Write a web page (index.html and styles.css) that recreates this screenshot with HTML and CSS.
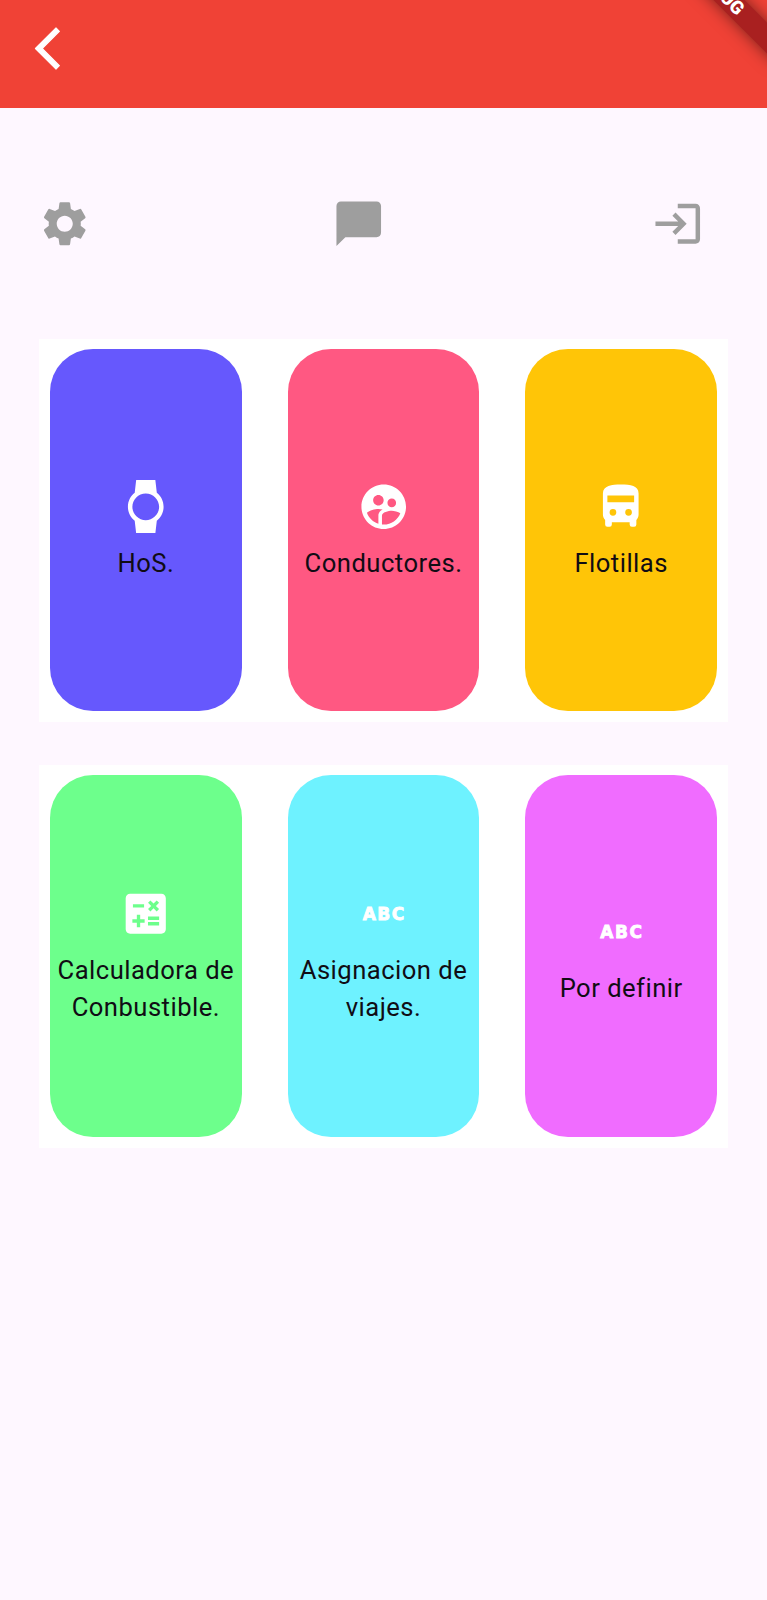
FILE: index.html
```html
<!DOCTYPE html>
<html lang="es">
<head>
<meta charset="utf-8">
<title>Menu</title>
<link rel="stylesheet" href="styles.css">
</head>
<body>
<header class="appbar">
  <svg class="back" viewBox="0 0 24 24"><path d="M17.600 3.900 16 2.300 6.300 12l9.700 9.700 1.600-1.600L9.500 12z"/></svg>
  <div class="ribbon">DEBUG</div>
</header>
<nav class="tools">
  <svg class="icon" viewBox="0 0 24 24"><path d="M19.14 12.94c.04-.3.06-.61.06-.94 0-.32-.02-.64-.07-.94l2.03-1.58c.18-.14.23-.41.12-.61l-1.92-3.32c-.12-.22-.37-.29-.59-.22l-2.39.96c-.5-.38-1.03-.7-1.62-.94l-.36-2.54c-.04-.24-.24-.41-.48-.41h-3.84c-.24 0-.43.17-.47.41l-.36 2.54c-.59.24-1.13.57-1.62.94l-2.39-.96c-.22-.08-.47 0-.59.22L2.740 8.870c-.12.21-.08.47.12.61l2.030 1.580c-.05.3-.09.63-.09.94s.02.64.07.94l-2.030 1.580c-.18.14-.23.41-.12.61l1.920 3.320c.12.22.37.29.59.22l2.390-.96c.5.38 1.030.7 1.620.94l.36 2.540c.05.24.24.41.48.41h3.840c.24 0 .44-.17.47-.41l.36-2.540c.59-.24 1.130-.56 1.620-.94l2.390.96c.22.08.47 0 .59-.22l1.920-3.320c.12-.22.07-.47-.12-.61l-2.010-1.580zM12 15.600c-1.980 0-3.600-1.620-3.600-3.600s1.620-3.600 3.600-3.600 3.600 1.620 3.600 3.600-1.620 3.600-3.600 3.600z"/></svg>
  <svg class="icon chat" viewBox="0 0 24 24"><path d="M20 2H4c-1.100 0-2 .9-2 2v18l4-4h14c1.100 0 2-.9 2-2V4c0-1.100-.9-2-2-2z"/></svg>
  <svg class="icon exit" viewBox="0 0 24 24"><path d="M11 7 9.600 8.400l2.600 2.600H2v2h10.200l-2.600 2.600L11 17l5-5zM20 19h-8v2h8c1.100 0 2-.9 2-2V5c0-1.100-.9-2-2-2h-8v2h8z"/></svg>
</nav>
<main class="panels">
  <section class="panel">
    <div class="card blue">
      <svg class="icon" viewBox="0 0 24 24"><path d="M20 12c0-2.540-1.190-4.810-3.040-6.270L16.300 0H7.700l-.65 5.730C5.190 7.190 4 9.450 4 12s1.190 4.810 3.050 6.270L7.700 24h8.600l.66-5.730C18.810 16.810 20 14.540 20 12zM6 12c0-3.310 2.690-6 6-6s6 2.690 6 6-2.690 6-6 6-6-2.690-6-6z"/></svg>
      <span>HoS.</span>
    </div>
    <div class="card pink">
      <svg class="icon" viewBox="0 0 24 24"><path d="M11.990 2c-5.520 0-10 4.480-10 10s4.480 10 10 10 10-4.480 10-10-4.480-10-10-10zm3.610 6.340c1.070 0 1.930.86 1.930 1.930 0 1.070-.86 1.930-1.930 1.930-1.070 0-1.930-.86-1.930-1.930-.01-1.070.86-1.930 1.930-1.930zm-6-1.580c1.300 0 2.360 1.060 2.360 2.360 0 1.300-1.060 2.360-2.360 2.360s-2.360-1.060-2.360-2.360c0-1.310 1.050-2.360 2.360-2.360zm0 9.130v3.750c-2.400-.75-4.300-2.600-5.140-4.960 1.050-1.120 3.670-1.690 5.140-1.690.53 0 1.200.08 1.900.22-1.640.87-1.900 2.020-1.900 2.680zM11.990 20c-.27 0-.53-.01-.79-.04v-4.070c0-1.420 2.940-2.130 4.400-2.130 1.070 0 2.920.39 3.840 1.150-1.170 2.970-4.060 5.090-7.450 5.090z"/></svg>
      <span>Conductores.</span>
    </div>
    <div class="card amber">
      <svg class="icon" viewBox="0 0 24 24"><path fill-rule="evenodd" d="M12 2C8 2 4 2.500 4 6v9.500c0 .95.38 1.810 1 2.440V20a1 1 0 0 0 1 1h1a1 1 0 0 0 1-1v-1h8v1a1 1 0 0 0 1 1h1a1 1 0 0 0 1-1v-2.060c.62-.63 1-1.490 1-2.440V6c0-3.500-3.580-4-8-4zM8.500 16a1.500 1.500 0 1 1 0-3 1.500 1.500 0 0 1 0 3zM15.500 16a1.500 1.500 0 1 1 0-3 1.500 1.500 0 0 1 0 3zM18 10H6V7h12z"/></svg>
      <span>Flotillas</span>
    </div>
  </section>
  <section class="panel">
    <div class="card green">
      <svg class="icon" viewBox="0 0 24 24"><path d="M19 3H5c-1.100 0-2 .9-2 2v14c0 1.100.9 2 2 2h14c1.100 0 2-.9 2-2V5c0-1.100-.9-2-2-2zm-5.970 4.060L14.090 6l1.410 1.410L16.910 6l1.060 1.060-1.410 1.410 1.410 1.410-1.060 1.060-1.410-1.400-1.410 1.410-1.060-1.060 1.410-1.410-1.410-1.420zm-6.780.66h5v1.500h-5v-1.500zM11.500 16h-2v2H8v-2H6v-1.500h2v-2h1.500v2h2V16zm6.500 1.250h-5v-1.500h5v1.500zm0-2.500h-5v-1.500h5v1.500z"/></svg>
      <span>Calculadora de Conbustible.</span>
    </div>
    <div class="card cyan">
      <b class="icon abc">ABC</b>
      <span>Asignacion de viajes.</span>
    </div>
    <div class="card violet">
      <b class="icon abc">ABC</b>
      <span>Por definir</span>
    </div>
  </section>
</main>
</body>
</html>
```
FILE: styles.css
```css
body {
  margin: 0;
  min-height: 1600px;
  background: #fef7ff;
  color: #100c14;
  font-family: Roboto, sans-serif;
}

.appbar {
  position: relative;
  box-sizing: border-box;
  height: 108px;
  padding: 22.500px 0 0 21.500px;
  overflow: hidden;
  background: #f04236;
}

.back {
  display: block;
  width: 51px;
  height: 51px;
  fill: #fff;
  stroke: #fff;
  stroke-width: 0.500;
  stroke-linejoin: round;
}

/* Diagonal corner banner */
.ribbon {
  position: absolute;
  left: 629.500px;
  top: -20px;
  width: 180px;
  height: 22px;
  background: #a92020;
  box-shadow: 0 0 16px rgba(0, 0, 0, 0.5);
  color: #fff;
  font-size: 18.600px;
  font-weight: 900;
  line-height: 22px;
  text-align: center;
  transform: rotate(45deg);
}

.tools {
  display: flex;
  padding: 89px 62.500px 0 38px;
}

.icon {
  display: block;
  flex: none;
  width: 53.500px;
  height: 53.500px;
}

.tools .icon {
  fill: #9e9e9e;
}

.chat {
  margin-left: 240.500px;
}

.exit {
  margin-left: auto;
}

.panels {
  display: flex;
  flex-direction: column;
  gap: 42.500px;
  padding: 88.500px 39px 0;
}

.panel {
  display: flex;
  justify-content: space-between;
  box-sizing: border-box;
  height: 383px;
  padding: 10px 11px 11px;
  background: #fff;
}

.card {
  display: flex;
  flex-direction: column;
  align-items: center;
  justify-content: center;
  gap: 11.500px;
  box-sizing: border-box;
  width: 191.700px;
  padding-top: 1px;
  border-radius: 43px;
  font-size: 25.600px;
  line-height: 36.400px;
  letter-spacing: 0.480px;
  text-align: center;
}

.card .icon {
  fill: #fff;
}

.abc {
  color: #fff;
  font: bold 17px/55px "DejaVu Sans", sans-serif;
  letter-spacing: 1.500px;
  text-indent: 1.500px;
  -webkit-text-stroke: 0.800px #fff;
}

.blue { background: #6658fd; }
.pink { background: #ff5882; }
.amber { background: #ffc507; }
.green { background: #6dff8c; }
.cyan { background: #6ef2ff; }
.violet { background: #f06cff; }
```
